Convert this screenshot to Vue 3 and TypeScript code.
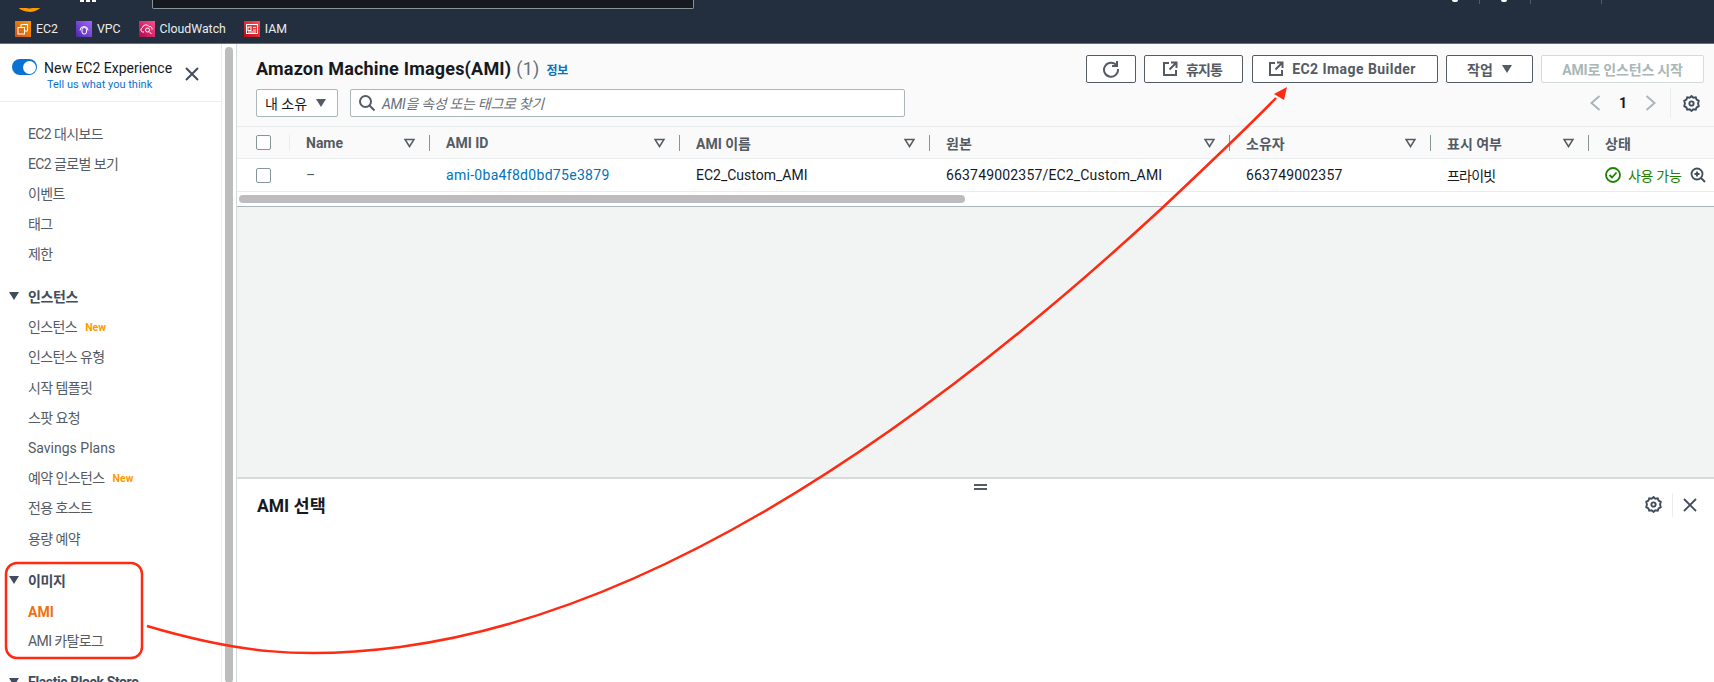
<template>
  <div class="page">
    <header class="topbar">
      <div class="globalnav">
        <span class="logo-clip"><svg width="26" height="5" viewBox="0 0 26 5"><path d="M1 -4C8 4 18 4 25 -3" fill="none" stroke="#f90" stroke-width="3.5" /></svg></span>
        <span class="grid-clip"><i /><i /><i /></span>
        <div class="searchbox" />
        <div class="nav-right">
          <span class="dot" /><span class="nav-div" /><span class="dot" /><span class="nav-div nav-div2" /><span class="nav-div nav-div3" />
        </div>
      </div>
      <div class="bookmarks">
        <a v-for="b in bookmarks" :key="b.label" class="bookmark">
          <span class="bm-icon" :style="{ background: b.bg }">
            <svg width="16" height="16" viewBox="0 0 16 16" fill="none" stroke="#fff" stroke-width="1">
              <template v-if="b.label === 'EC2'"><rect x="3" y="6.5" width="6.5" height="6.5" /><path d="M6 6.5V3.5h6.5V10H9.5" /></template>
              <template v-else-if="b.label === 'VPC'"><path d="M4 9.500a4 4 0 1 1 8 0" /><rect x="6" y="6.500" width="4.500" height="6.500" rx="2" /></template>
              <template v-else-if="b.label === 'CloudWatch'"><path d="M5 11H3.800a2.200 2.200 0 0 1-.3-4.300A3.500 3.500 0 0 1 10 5.600a2.400 2.400 0 0 1 3 3" /><circle cx="8.500" cy="9" r="2" /><path d="M10 10.500l2.500 2.500" /></template>
              <template v-else><rect x="2.500" y="3.500" width="11" height="9" /><rect x="4" y="6" width="3" height="3.500" /><path d="M9 6.500h3M9 9h3M4 11h8" /></template>
            </svg>
          </span>
          {{ b.label }}
        </a>
      </div>
    </header>

    <div class="body">
      <aside class="sidebar">
        <div class="experience">
          <span class="toggle"><i /></span>
          <div class="exp-text">
            <div class="exp-title">New EC2 Experience</div>
            <a class="exp-link">Tell us what you think</a>
          </div>
          <svg class="exp-close" width="16" height="16" viewBox="0 0 16 16"><path d="M2 2l12 12M14 2L2 14" stroke="#414d5c" stroke-width="2" fill="none" /></svg>
        </div>
        <nav class="sidenav">
          <section v-for="(g, i) in navGroups" :key="i" class="navgroup">
            <div v-if="g.title" class="navhead"><span class="caret" />{{ g.title }}</div>
            <a v-for="it in g.items" :key="it.label" class="navitem" :class="{ active: it.active, latin: it.latin }">
              {{ it.label }}<span v-if="it.isNew" class="new">New</span>
            </a>
          </section>
        </nav>
      </aside>
      <div class="sidescroll"><span class="thumb" /></div>

      <main class="main">
        <div class="tablearea">
          <div class="toolbar">
            <div class="toolbar-left">
              <h1 class="title"><span>Amazon Machine Images(AMI)</span><span class="count">(1)</span><a class="info">정보</a></h1>
              <div class="filters">
                <div class="select">내 소유 <span class="caret dark" /></div>
                <div class="search">
                  <svg width="18" height="18" viewBox="0 0 18 18" fill="none" stroke="#545b64" stroke-width="2"><circle cx="7.500" cy="7.500" r="5.500" /><path d="M11.500 11.500l5 5" /></svg>
                  <span>AMI을 속성 또는 태그로 찾기</span>
                </div>
              </div>
            </div>
            <div class="toolbar-right">
              <div class="buttons">
                <button class="btn btn-refresh">
                  <svg width="18" height="18" viewBox="0 0 18 18" fill="none" stroke="#545b64" stroke-width="2"><path d="M14.600 5.500A7 7 0 1 0 16 9" /><path d="M15 1v5h-5" /></svg>
                </button>
                <button class="btn btn-bin"><svg class="ext" width="16" height="16" viewBox="0 0 16 16" fill="none" stroke="#545b64" stroke-width="2"><path d="M7 2H2v12h12V9" /><path d="M9 1.500h5.500V7M14 2L7.500 8.500" /></svg>휴지통</button>
                <button class="btn btn-ib"><svg class="ext" width="16" height="16" viewBox="0 0 16 16" fill="none" stroke="#545b64" stroke-width="2"><path d="M7 2H2v12h12V9" /><path d="M9 1.500h5.500V7M14 2L7.500 8.500" /></svg>EC2 Image Builder</button>
                <button class="btn btn-act">작업 <span class="caret dark" /></button>
                <button class="btn btn-off">AMI로 인스턴스 시작</button>
              </div>
              <div class="pager">
                <svg width="12" height="16" viewBox="0 0 12 16" fill="none" stroke="#aab7b8" stroke-width="2"><path d="M10.500 1L2.500 8l8 7" /></svg>
                <b>1</b>
                <svg width="12" height="16" viewBox="0 0 12 16" fill="none" stroke="#aab7b8" stroke-width="2"><path d="M1.500 1l8 7-8 7" /></svg>
                <span class="pager-div" />
                <svg class="gear" width="17" height="17" viewBox="0 0 16 16" fill="none" stroke="#414d5c" stroke-width="1.800"><path d="M8 1l1.700 1.500 2.300-.3.800 2.200 2 1.100-.6 2.500.6 2.500-2 1.100-.8 2.200-2.300-.3L8 15l-1.700-1.500-2.300.3-.8-2.200-2-1.100.6-2.500-.6-2.500 2-1.100.8-2.200 2.300.3z" /><circle cx="8" cy="8" r="2" /></svg>
              </div>
            </div>
          </div>

          <div class="trow thead">
            <div class="cell-check"><span class="checkbox" /><span class="check-div" /></div>
            <div v-for="c in columns" :key="c" class="th">
              <span class="th-label">{{ c }}</span>
              <svg class="sort" width="11" height="10" viewBox="0 0 11 10" fill="none" stroke="#545b64" stroke-width="1.500"><path d="M1 1.500h9L5.500 8.500z" /></svg>
              <span class="th-div" />
            </div>
            <div class="th th-last">상태</div>
          </div>
          <div class="trow tbody">
            <div class="cell-check"><span class="checkbox" /></div>
            <div class="td dash">–</div>
            <div class="td link">ami-0ba4f8d0bd75e3879</div>
            <div class="td">EC2_Custom_AMI</div>
            <div class="td num">663749002357/EC2_Custom_AMI</div>
            <div class="td num">663749002357</div>
            <div class="td kr">프라이빗</div>
            <div class="td status">
              <svg width="16" height="16" viewBox="0 0 16 16" fill="none" stroke="#1d8102" stroke-width="1.800"><circle cx="8" cy="8" r="7" /><path d="M4.500 8l2.500 2.500 4.500-5" /></svg>
              <span>사용 가능</span>
              <svg class="zoomicon" width="16" height="16" viewBox="0 0 16 16" fill="none" stroke="#414d5c" stroke-width="1.800"><circle cx="7" cy="7" r="5.500" /><path d="M11 11l4 4M4.500 7h5M7 4.500v5" /></svg>
            </div>
          </div>
          <div class="hscroll"><span class="hthumb" /></div>
        </div>

        <div class="emptyarea" />

        <div class="detail">
          <div class="handle"><i /><i /></div>
          <div class="detail-head">
            <h2>AMI 선택</h2>
            <div class="detail-tools">
              <svg width="17" height="17" viewBox="0 0 16 16" fill="none" stroke="#414d5c" stroke-width="1.800"><path d="M8 1l1.700 1.500 2.300-.3.800 2.200 2 1.100-.6 2.500.6 2.500-2 1.100-.8 2.200-2.300-.3L8 15l-1.700-1.500-2.300.3-.8-2.200-2-1.100.6-2.500-.6-2.500 2-1.100.8-2.200 2.300.3z" /><circle cx="8" cy="8" r="2" /></svg>
              <span class="tool-div" />
              <svg width="14" height="14" viewBox="0 0 14 14" fill="none" stroke="#414d5c" stroke-width="1.800"><path d="M1 1l12 12M13 1L1 13" /></svg>
            </div>
          </div>
        </div>
      </main>
    </div>

    <!-- annotation drawn on top of the screenshot -->
    <svg class="annotation" width="1714" height="682" viewBox="0 0 1714 682" fill="none">
      <rect x="6" y="563" width="136" height="95" rx="11" stroke="#ff2a12" stroke-width="2.500" />
      <path d="M147 626C235 652 300 660 400 647C640 615 900 450 1160 210C1210 163 1245 130 1276 98" stroke="#ff2a12" stroke-width="2.500" />
      <path d="M1287 87L1274 94L1284 100Z" fill="#ff2a12" />
    </svg>
  </div>
</template>

<script setup lang="ts">
interface NavItem {
  label: string
  isNew?: boolean
  active?: boolean
  latin?: boolean
}

interface NavGroup {
  title?: string
  items: NavItem[]
}

const bookmarks = [
  { label: 'EC2', bg: 'linear-gradient(45deg, #c8511b, #ff9900)' },
  { label: 'VPC', bg: 'linear-gradient(45deg, #4d27a8, #a166ff)' },
  { label: 'CloudWatch', bg: 'linear-gradient(45deg, #b0084d, #ff4f8b)' },
  { label: 'IAM', bg: 'linear-gradient(45deg, #bd0816, #ff5252)' },
]

const navGroups: NavGroup[] = [
  {
    items: [
      { label: 'EC2 대시보드' },
      { label: 'EC2 글로벌 보기' },
      { label: '이벤트' },
      { label: '태그' },
      { label: '제한' },
    ],
  },
  {
    title: '인스턴스',
    items: [
      { label: '인스턴스', isNew: true },
      { label: '인스턴스 유형' },
      { label: '시작 템플릿' },
      { label: '스팟 요청' },
      { label: 'Savings Plans', latin: true },
      { label: '예약 인스턴스', isNew: true },
      { label: '전용 호스트' },
      { label: '용량 예약' },
    ],
  },
  {
    title: '이미지',
    items: [{ label: 'AMI', active: true, latin: true }, { label: 'AMI 카탈로그' }],
  },
  { title: 'Elastic Block Store', items: [] },
]

const columns = ['Name', 'AMI ID', 'AMI 이름', '원본', '소유자', '표시 여부']
</script>

<style>
html, body { margin: 0; background: #fff; overflow: hidden; }
</style>

<style scoped>
.page {
  position: relative;
  width: 1714px;
  height: 682px;
  overflow: hidden;
  font-family: Roboto, "Noto Sans CJK KR", sans-serif;
  font-size: 14px;
  color: #16191f;
}

.topbar { height: 44px; background: #232f3e; box-sizing: border-box; border-bottom: 1px solid #687078; }
.globalnav { position: relative; display: flex; height: 9px; }
.logo-clip { margin-left: 16px; height: 5px; }
.grid-clip { display: flex; gap: 2px; margin-left: 38px; height: 2px; }
.grid-clip i { width: 4px; height: 2px; background: #fff; }
.searchbox {
  margin-left: 56px;
  width: 540px;
  height: 8px;
  background: #16191f;
  border: 1px solid #879596;
  border-top: 0;
  border-radius: 0 0 2px 2px;
}
.nav-right { display: flex; margin-left: 758px; height: 4px; }
.dot { width: 6px; height: 2px; background: #fff; border-radius: 0 0 3px 3px; }
.nav-div { width: 1px; height: 4px; background: #545b64; margin: 0 21px 0 21px; }
.nav-div2 { margin-left: 23px; margin-right: 0; }
.nav-div3 { margin-left: 70px; }

.bookmarks { display: flex; gap: 18px; padding: 12px 0 0 15px; }
.bookmark { display: flex; align-items: center; gap: 5px; color: #eaeded; font-size: 12.300px; height: 16px; }
.bm-icon { display: flex; width: 16px; height: 16px; }

.body { display: flex; height: 638px; }

.sidebar { width: 221px; flex: none; border-right: 1px solid #eaeded; background: #fff; }
.experience {
  display: flex;
  height: 58px;
  box-sizing: border-box;
  border-bottom: 1px solid #eaeded;
  padding: 14px 0 0 12px;
  position: relative;
}
.toggle { width: 24px; height: 16px; border-radius: 8px; background: #0972d3; display: flex; align-items: center; justify-content: flex-end; padding-right: 1px; margin-top: 1px; }
.toggle i { width: 13px; height: 13px; border-radius: 50%; background: #fff; }
.exp-text { margin-left: 7px; }
.exp-title { font-size: 14px; line-height: 20px; white-space: nowrap; }
.exp-link { display: block; margin-left: 3px; font-size: 11px; line-height: 14px; color: #0972d3; }
.exp-close { margin: 8px 0 0 12px; }

.sidenav { padding-top: 16px; }
.navgroup { margin-bottom: 12px; }
.navgroup:first-child { margin-bottom: 13px; }
.navgroup:first-child .navitem { height: 30px; }
.navitem {
  display: flex;
  align-items: center;
  height: 30.200px;
  padding-left: 28px;
  color: #545b64;
  font-size: 14px;
  letter-spacing: -0.6px;
  white-space: pre;
}
.navitem.latin { letter-spacing: 0; padding-top: 2px; box-sizing: border-box; }
.navitem.active { color: #ec7211; font-weight: 700; padding-top: 4px; }
.new { margin-left: 8px; color: #ff9900; font-size: 10.500px; font-weight: 700; letter-spacing: 0; padding-top: 3px; }
.navhead {
  display: flex;
  align-items: center;
  height: 30.200px;
  padding-left: 9px;
  color: #414d5c;
  font-size: 14px;
  font-weight: 700;
  letter-spacing: -0.4px;
}
.navhead .caret { margin-right: 9px; }
.caret {
  display: inline-block;
  width: 0;
  height: 0;
  border-left: 5.500px solid transparent;
  border-right: 5.500px solid transparent;
  border-top: 8px solid #414d5c;
}
.caret.dark { border-top-color: #545b64; margin-left: 9px; }

.sidescroll { width: 15px; flex: none; border-right: 1px solid #d5dbdb; box-sizing: border-box; background: #fff; padding: 3px 3px 0 3px; }
.thumb { display: block; width: 8px; height: 636px; border-radius: 4px; background: #bdbdbd; }

.main { flex: 1; display: flex; flex-direction: column; min-width: 0; }
.tablearea { background: #fafafa; }
.toolbar { display: flex; justify-content: space-between; height: 83px; box-sizing: border-box; border-bottom: 1px solid #eaeded; }
.toolbar-left { padding: 12px 0 0 19px; }
.title {
  display: flex;
  align-items: baseline;
  gap: 5px;
  height: 26px;
  margin: 0;
  font-size: 18px;
  line-height: 26px;
  font-weight: 700;
  white-space: nowrap;
  letter-spacing: 0.2px;
}
.count { font-weight: 400; color: #687078; }
.info { font-size: 12px; font-weight: 700; color: #0073bb; margin-left: 2px; letter-spacing: -0.3px; }
.filters { display: flex; gap: 12px; margin-top: 7px; }
.select {
  display: flex;
  align-items: center;
  box-sizing: border-box;
  width: 82px;
  height: 28px;
  padding-left: 8px;
  background: #fff;
  border: 1px solid #aab7b8;
  border-radius: 2px;
  color: #16191f;
}
.search {
  display: flex;
  align-items: center;
  gap: 6px;
  box-sizing: border-box;
  width: 555px;
  height: 28px;
  padding-left: 7px;
  background: #fff;
  border: 1px solid #aab7b8;
  border-radius: 2px;
  color: #687078;
  font-style: italic;
  letter-spacing: -0.3px;
}
.toolbar-right { padding: 11px 10px 0 0; display: flex; flex-direction: column; align-items: flex-end; }
.buttons { display: flex; gap: 8px; }
.btn {
  display: flex;
  align-items: center;
  justify-content: center;
  height: 28px;
  box-sizing: border-box;
  background: #fff;
  border: 1px solid #545b64;
  border-radius: 2px;
  color: #545b64;
  font-family: inherit;
  font-size: 14px;
  font-weight: 700;
  padding: 0;
}
.btn-refresh { width: 50px; }
.btn-bin { width: 99px; margin-right: 1px; letter-spacing: -0.8px; padding-right: 3px; }
.btn-ib { width: 186px; letter-spacing: 0.45px; padding-right: 6px; }
.btn-act { width: 87px; }
.btn-off { width: 163px; border-color: #d5dbdb; color: #aab7b8; letter-spacing: -0.2px; }
.ext { margin-right: 8px; }
.pager { display: flex; align-items: center; height: 30px; margin-top: 5px; }
.pager b { width: 24px; margin: 0 10px; text-align: center; font-size: 14px; }
.pager-div { width: 1px; height: 30px; background: #eaeded; margin: 0 12px 0 13px; }
.gear { margin-right: 4px; }

.trow { display: grid; grid-template-columns: 53px 140px 250px 250px 300px 201px 158px 1fr; align-items: center; }
.thead { height: 32px; background: #fafafa; border-bottom: 1px solid #eaeded; box-sizing: border-box; color: #545b64; font-weight: 700; }
.tbody { height: 33px; background: #fff; border-bottom: 1px solid #eaeded; box-sizing: border-box; }
.cell-check { position: relative; display: flex; align-items: center; height: 100%; padding-left: 19px; }
.check-div { position: absolute; right: 0; width: 1px; height: 16px; background: #eaeded; }
.checkbox { width: 13px; height: 13px; background: #fff; border: 1px solid #879596; border-radius: 2px; }
.th { position: relative; display: flex; align-items: center; height: 100%; padding-left: 16px; white-space: nowrap; }
.sort { position: absolute; right: 15px; }
.th-div { position: absolute; right: 0; width: 1px; height: 16px; background: #879596; }
.th-last { padding-left: 16px; }
.td { padding-left: 16px; white-space: nowrap; }
.dash { color: #545b64; }
.link { color: #0073bb; letter-spacing: 0.3px; }
.num { letter-spacing: 0.17px; }
.kr { letter-spacing: -0.8px; }
.status { display: flex; align-items: center; color: #1d8102; padding-left: 16px; }
.status span { margin-left: 7px; letter-spacing: -0.3px; }
.zoomicon { margin-left: 8px; }
.hscroll { height: 15px; background: #fff; border-bottom: 1px solid #aab7b8; box-sizing: border-box; padding: 3px 0 0 2px; }
.hthumb { display: block; width: 726px; height: 8px; border-radius: 4px; background: #bdbdbd; }

.emptyarea { height: 272px; background: #f2f3f3; border-bottom: 2px solid #d5dbdb; box-sizing: border-box; }

.detail { flex: 1; background: #fff; position: relative; }
.handle { display: flex; flex-direction: column; align-items: center; gap: 2px; padding-top: 5px; height: 7px; width: 1487px; }
.handle i { flex: none; width: 13px; height: 2px; background: #545b64; }
.detail-head { display: flex; justify-content: space-between; align-items: center; padding: 1px 17px 0 20px; }
.detail-head h2 { margin: 0; font-size: 17.500px; font-weight: 700; }
.detail-tools { display: flex; align-items: center; }
.tool-div { width: 1px; height: 24px; background: #eaeded; margin: 0 10px; }

.annotation { position: absolute; top: 0; left: 0; pointer-events: none; }
</style>
